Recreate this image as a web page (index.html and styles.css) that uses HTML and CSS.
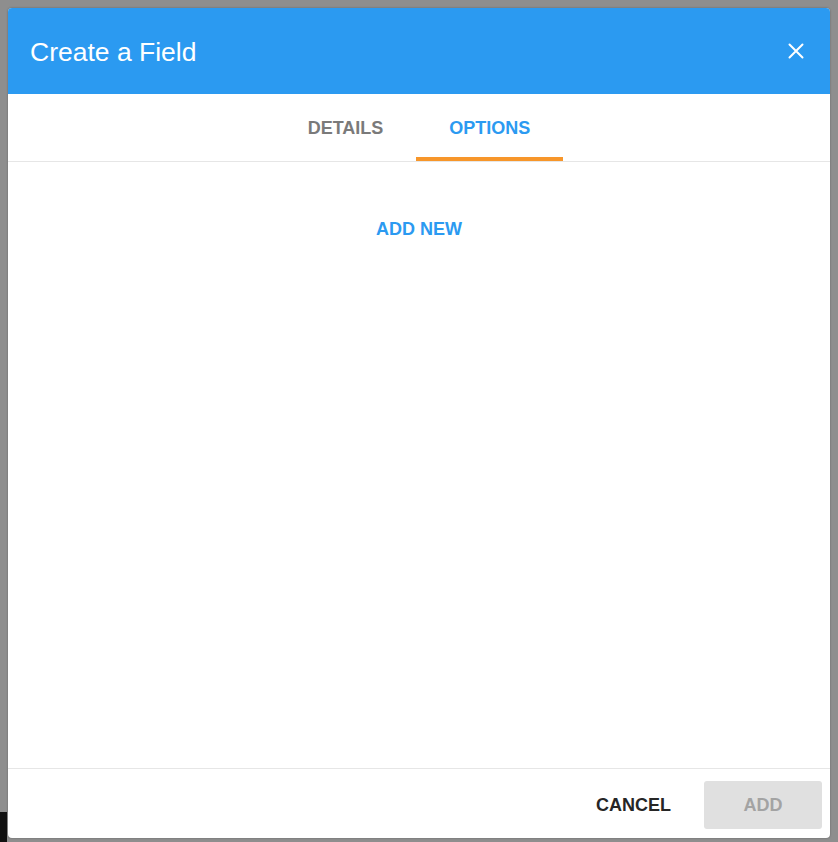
FILE: index.html
```html
<!DOCTYPE html>
<html lang="en">
<head>
  <meta charset="UTF-8">
  <meta name="viewport" content="width=device-width, initial-scale=1">
  <title>Create a Field</title>
  <link rel="stylesheet" href="styles.css">
</head>
<body>

  <div class="corner-mark"></div>

  <div class="dialog">
    <div class="dialog-header">
      <h1>Create a Field</h1>
      <button class="close-btn" aria-label="Close">
        <svg width="16" height="16" viewBox="0 0 16 16">
          <path d="M1.5 1.5 L14.5 14.5 M14.5 1.5 L1.5 14.5" stroke="#ffffff" stroke-width="2" stroke-linecap="round"/>
        </svg>
      </button>
    </div>

    <div class="tabs">
      <div class="tab">DETAILS</div>
      <div class="tab active">OPTIONS</div>
    </div>

    <div class="dialog-body">
      <button class="add-new">ADD NEW</button>
    </div>

    <div class="dialog-footer">
      <button class="btn-cancel">CANCEL</button>
      <button class="btn-add" disabled>ADD</button>
    </div>
  </div>

</body>
</html>
```

FILE: styles.css
```css
body {
  font-family: 'Liberation Sans', Arial, sans-serif;
  margin: 0;
  padding: 8px 8px 4px 8px;
  background: #8e8e8e;
  box-sizing: border-box;
  height: 842px;
}

.corner-mark {
  position: absolute;
  left: 0;
  top: 812px;
  width: 7px;
  height: 30px;
  background: #111;
}

.dialog {
  width: 822px;
  height: 830px;
  background: #ffffff;
  border-radius: 4px;
  display: flex;
  flex-direction: column;
  overflow: hidden;
  box-shadow: 0 0 2px rgba(0, 0, 0, 0.35);
}

.dialog-header {
  height: 86px;
  background: #2b9af1;
  display: flex;
  align-items: center;
  justify-content: space-between;
  padding: 0 26px 0 22px;
}

.dialog-header h1 {
  margin: 0;
  color: #ffffff;
  font-size: 26.5px;
  font-weight: normal;
  padding-top: 2px;
}

.close-btn {
  background: none;
  border: none;
  padding: 0;
  width: 16px;
  height: 16px;
  cursor: pointer;
}

.tabs {
  display: flex;
  justify-content: center;
  border-bottom: 1px solid #e6e6e6;
}

.tab {
  height: 67px;
  box-sizing: border-box;
  padding: 6px 33px 0;
  display: flex;
  align-items: center;
  font-size: 18px;
  font-weight: bold;
  color: #7a7a7a;
  border-bottom: 4px solid transparent;
}

.tab.active {
  color: #2b9af1;
  border-bottom-color: #f7962a;
}

.dialog-body {
  flex: 1;
  display: flex;
  justify-content: center;
  align-items: flex-start;
  padding-top: 51px;
}

.add-new {
  background: none;
  border: none;
  font-family: inherit;
  font-size: 18px;
  font-weight: bold;
  color: #2b9af1;
  padding: 6px 10px;
  cursor: pointer;
}

.dialog-footer {
  border-top: 1px solid #e6e6e6;
  display: flex;
  justify-content: flex-end;
  padding: 12px 8px 9px;
}

.dialog-footer button {
  height: 48px;
  border: none;
  border-radius: 3px;
  font-family: inherit;
  font-size: 18px;
  font-weight: bold;
  cursor: pointer;
}

.btn-cancel {
  background: none;
  color: #262626;
  padding: 0 33px;
}

.btn-add {
  width: 118px;
  background: #e0e0e0;
  color: #a3a3a3;
}
```
